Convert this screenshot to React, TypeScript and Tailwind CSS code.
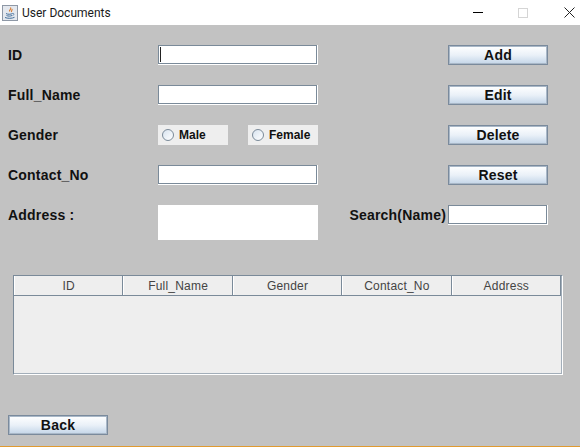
const sans = "font-['Liberation_Sans',Arial,sans-serif]";

function JavaIcon() {
  return (
    <svg width="16" height="16" viewBox="0 0 16 16" fill="none">
      <rect x="0.5" y="0.5" width="15" height="15" fill="#e4e8ee" stroke="#8e98a6" />
      <path d="M8.5 2.5C10 4 7 5 7.5 6.5M10 4C10.5 5.5 9 6 9.5 7" stroke="#d9772a" strokeWidth="1.1" />
      <path d="M4 8.5C5.5 9.5 9 9.5 10.5 8.5M4.5 10.5C6 11.3 8.5 11.3 10 10.5M3 12.5C5.5 13.6 10 13.6 12.5 12.3" stroke="#44709c" strokeWidth="1" />
      <path d="M10.5 8.5C12.5 8 12.5 10 10.5 10.5" stroke="#44709c" strokeWidth="0.8" />
    </svg>
  );
}

function TitleBar() {
  return (
    <div className="flex items-center shrink-0 h-[25px] bg-white">
      <div className="ml-[2px] mr-[4px] flex">
        <JavaIcon />
      </div>
      <span className="font-['Roboto',sans-serif] text-[12px] text-[#1a1a1a]">User Documents</span>
      <div className="ml-auto flex items-center">
        <div className="w-[10px] h-px bg-black mr-[35px]" />
        <div className="w-[10px] h-[10px] border border-[#d5d5d5] mr-[36px]" />
        <svg width="11" height="11" viewBox="0 0 11 11" className="mr-[5px]">
          <path d="M0.5 0.5L10.5 10.5M10.5 0.5L0.5 10.5" stroke="#222" strokeWidth="1" />
        </svg>
      </div>
    </div>
  );
}

function FieldLabel({ children }: { children: string }) {
  return (
    <div className={`${sans} w-[150px] shrink-0 text-[14px] font-bold tracking-[0.2px] text-[#111] leading-5`}>
      {children}
    </div>
  );
}

function TextField({ caret, width = "w-[160px]" }: { caret?: boolean; width?: string }) {
  return (
    <div className={`${width} shrink-0 h-5 bg-white border-b border-r border-white`}>
      <div className="h-full border border-[#7a8a99] flex items-center pl-px">
        {caret && <div className="w-px h-[15px] bg-[#222]" />}
      </div>
    </div>
  );
}

function MetalButton({ label }: { label: string }) {
  return (
    <button className={`${sans} block shrink-0 w-[100px] h-5 border border-[#7a8a9c] shadow-[inset_0_0_0_1px_#a9b8c8] bg-gradient-to-b from-white via-[#eaf1f8] to-[#c3d5e8] text-[14px] font-bold tracking-[0.2px] text-[#111] leading-4`}>
      {label}
    </button>
  );
}

function Radio({ label }: { label: string }) {
  return (
    <div className="w-[70px] h-5 bg-[#eeeeee] flex items-center pl-1 gap-[5px]">
      <div className="w-[12px] h-[12px] rounded-full border border-[#7a8a99] bg-gradient-to-br from-[#d8e3ef] to-white" />
      <span className={`${sans} text-[12px] font-bold text-[#111]`}>{label}</span>
    </div>
  );
}

const columns = ["ID", "Full_Name", "Gender", "Contact_No", "Address"];

function Table() {
  return (
    <div className="ml-[13px] mt-[35px] w-[550px] h-[100px] shrink-0 border border-[#7a8a99] border-r-white border-b-white">
      <div className="h-full border-r border-b border-[#a3aeb9] bg-[#eeeeee]">
        <div className="flex h-[20px] border-b border-[#7a8a99]">
          {columns.map((c) => (
            <div key={c} className={`${sans} flex-1 flex items-center justify-center border-l border-white border-r border-r-[#7a8a99] text-[12px] tracking-[0.2px] text-[#444]`}>
              {c}
            </div>
          ))}
        </div>
      </div>
    </div>
  );
}

export default function App() {
  return (
    <div className="w-[580px] h-[447px] bg-[#c2c2c2] flex flex-col overflow-hidden">
      <TitleBar />
      <div className="flex-1 flex flex-col pt-5">
        <div className="flex flex-col gap-5 pl-2">
          <div className="flex items-center">
            <FieldLabel>ID</FieldLabel>
            <TextField caret />
            <div className="ml-[130px]"><MetalButton label="Add" /></div>
          </div>
          <div className="flex items-center">
            <FieldLabel>Full_Name</FieldLabel>
            <TextField />
            <div className="ml-[130px]"><MetalButton label="Edit" /></div>
          </div>
          <div className="flex items-center">
            <FieldLabel>Gender</FieldLabel>
            <div className="w-[160px] flex gap-5">
              <Radio label="Male" />
              <Radio label="Female" />
            </div>
            <div className="ml-[130px]"><MetalButton label="Delete" /></div>
          </div>
          <div className="flex items-center">
            <FieldLabel>Contact_No</FieldLabel>
            <TextField />
            <div className="ml-[130px]"><MetalButton label="Reset" /></div>
          </div>
          <div className="flex items-start">
            <FieldLabel>Address :</FieldLabel>
            <div className="w-[160px] h-[35px] bg-white" />
            <div className={`${sans} w-[128px] text-right text-[14px] font-bold tracking-[0.2px] text-[#111] leading-5`}>Search(Name)</div>
            <div className="ml-[2px]"><TextField width="w-[100px]" /></div>
          </div>
        </div>
        <Table />
        <div className="pl-2 mt-[40px]">
          <MetalButton label="Back" />
        </div>
      </div>
      <div className="h-px shrink-0 bg-[#e09a30]" />
    </div>
  );
}
